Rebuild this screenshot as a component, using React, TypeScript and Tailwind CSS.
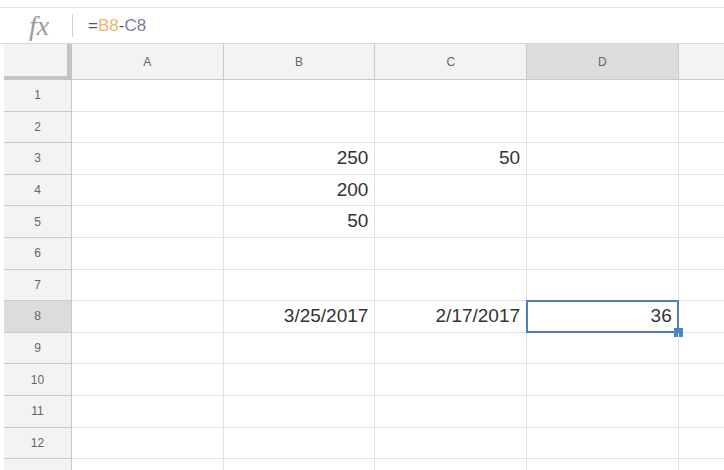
const cols = ["A", "B", "C", "D"];

const data: Record<number, Record<string, string>> = {
  3: { B: "250", C: "50" },
  4: { B: "200" },
  5: { B: "50" },
  8: { B: "3/25/2017", C: "2/17/2017", D: "36" },
};

function Row({ n, label = true }: { n: number; label?: boolean }) {
  const selectedRow = n === 8;
  return (
    <div className="flex h-[31.6px] shrink-0">
      <div className="w-[4px] shrink-0 bg-white" />
      <div
        className={`flex w-[68px] shrink-0 items-center justify-center border-b border-r border-[#c9c9c9] text-[12px] text-[#666] ${
          selectedRow ? "bg-[#dcdcdc]" : "bg-[#f3f3f3]"
        }`}
      >
        {label ? n : null}
      </div>
      {cols.map((c) => {
        const value = data[n]?.[c];
        const selected = n === 8 && c === "D";
        return (
          <div
            key={c}
            className="relative flex w-[151.7px] shrink-0 items-center justify-end border-b border-r border-[#e2e2e2] pr-[6px] text-[19px] text-[#333]"
          >
            {value}
            {selected && (
              <>
                <div className="absolute -left-px -top-px bottom-[-1px] right-[-1px] border-2 border-[#4f7fbc]" />
                <div className="absolute bottom-[-5px] right-[-5px] h-[9px] w-[9px] bg-[#4a84c9]" />
              </>
            )}
          </div>
        );
      })}
      <div className="flex-1 border-b border-[#e2e2e2]" />
    </div>
  );
}

export default function App() {
  return (
    <div className="flex h-[470px] w-[724px] flex-col overflow-hidden bg-white font-['Liberation_Sans',Arial,sans-serif]">
      <div className="h-[8px] shrink-0 border-b border-[#e3e3e3]" />

      <div className="flex h-[36px] shrink-0 items-center border-b border-[#d6d6d6]">
        <div className="flex w-[73px] shrink-0 items-center">
          <span className="w-[72px] pl-[6px] text-center font-['Liberation_Serif',serif] text-[28px] italic leading-none text-[#9a9a9a]">
            fx
          </span>
          <span className="h-[23px] w-px bg-[#d0d0d0]" />
        </div>
        <div className="pl-[15px] text-[17px] text-[#555]">
          <span>=</span>
          <span className="text-[#f3b46c]">B8</span>
          <span>-</span>
          <span className="text-[#8277a6]">C8</span>
        </div>
      </div>

      <div className="flex h-[36px] shrink-0">
        <div className="w-[4px] shrink-0 bg-white" />
        <div className="w-[68px] shrink-0 border-b-[4px] border-r-[5px] border-[#c4c4c4] bg-[#f3f3f3]" />
        {cols.map((c) => (
          <div
            key={c}
            className={`flex w-[151.7px] shrink-0 items-center justify-center border-b border-r border-[#c9c9c9] text-[12px] text-[#666] ${
              c === "D" ? "bg-[#dcdcdc]" : "bg-[#f3f3f3]"
            }`}
          >
            {c}
          </div>
        ))}
        <div className="flex-1 border-b border-[#c9c9c9] bg-[#f3f3f3]" />
      </div>

      {Array.from({ length: 12 }, (_, i) => (
        <Row key={i} n={i + 1} />
      ))}
      <Row n={13} label={false} />
    </div>
  );
}
